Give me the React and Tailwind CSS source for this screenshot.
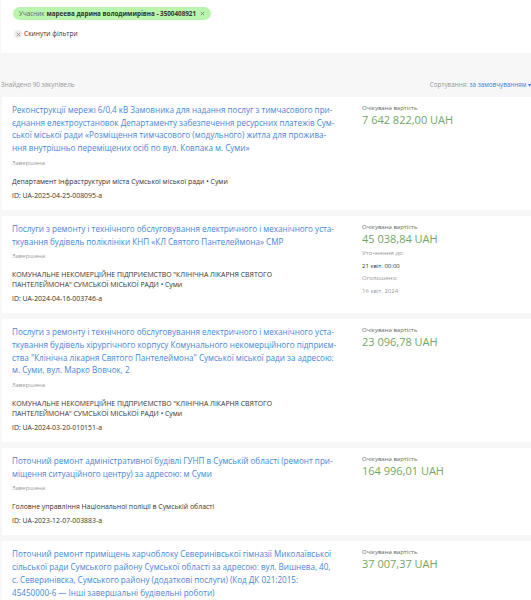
import React from 'react';

const tenders = [
  {
    title: [
      'Реконструкції мережі 6/0,4 кВ Замовника для надання послуг з тимчасового при-',
      'єднання електроустановок Департаменту забезпечення ресурсних платежів Сум-',
      'ської міської ради «Розміщення тимчасового (модульного) житла для прожива-',
      'ння внутрішньо переміщених осіб по вул. Ковпака м. Суми»',
    ],
    org: ['Департамент інфраструктури міста Сумської міської ради • Суми'],
    id: 'UA-2025-04-25-008095-a',
    value: '7 642 822,00 UAH',
  },
  {
    title: [
      'Послуги з ремонту і технічного обслуговування електричного і механічного уста-',
      'ткування будівель поліклініки КНП «КЛ Святого Пантелеймона» СМР',
    ],
    org: [
      'КОМУНАЛЬНЕ НЕКОМЕРЦІЙНЕ ПІДПРИЄМСТВО "КЛІНІЧНА ЛІКАРНЯ СВЯТОГО',
      'ПАНТЕЛЕЙМОНА" СУМСЬКОЇ МІСЬКОЇ РАДИ • Суми',
    ],
    id: 'UA-2024-04-16-003746-a',
    value: '45 038,84 UAH',
    extra: true,
  },
  {
    title: [
      'Послуги з ремонту і технічного обслуговування електричного і механічного уста-',
      'ткування будівель хірургічного корпусу Комунального некомерційного підприєм-',
      'ства "Клінічна лікарня Святого Пантелеймона" Сумської міської ради за адресою:',
      'м. Суми, вул. Марко Вовчок, 2',
    ],
    org: [
      'КОМУНАЛЬНЕ НЕКОМЕРЦІЙНЕ ПІДПРИЄМСТВО "КЛІНІЧНА ЛІКАРНЯ СВЯТОГО',
      'ПАНТЕЛЕЙМОНА" СУМСЬКОЇ МІСЬКОЇ РАДИ • Суми',
    ],
    id: 'UA-2024-03-20-010151-a',
    value: '23 096,78 UAH',
  },
  {
    title: [
      'Поточний ремонт адміністративної будівлі ГУНП в Сумській області (ремонт при-',
      'міщення ситуаційного центру) за адресою: м Суми',
    ],
    org: ['Головне управління Національної поліції в Сумській області'],
    id: 'UA-2023-12-07-003883-a',
    value: '164 996,01 UAH',
  },
  {
    title: [
      'Поточний ремонт приміщень харчоблоку Северинівської гімназії Миколаївської',
      'сільської ради Сумського району Сумської області за адресою: вул. Вишнева, 40,',
      'с. Северинівска, Сумського району (додаткові послуги) (Код ДК 021:2015:',
      '45450000-6 — Інші завершальні будівельні роботи)',
    ],
    value: '37 007,37 UAH',
  },
];

function X({ className }) {
  return (
    <svg viewBox="0 0 10 10" className={className} fill="none" stroke="currentColor" strokeWidth="1.2" strokeLinecap="round">
      <path d="M3 3l4 4M7 3l-4 4" />
    </svg>
  );
}

function TenderCard({ t }) {
  return (
    <div className="ml-[2px] bg-white pt-[7px] pb-[9px] pl-[10px] flex">
      <div className="w-[350px] shrink-0">
        <div className="text-[8.1px] leading-[12.7px] text-[#4787d8]">
          {t.title.map((l, i) => (
            <div key={i} className="whitespace-nowrap">{l}</div>
          ))}
        </div>
        <div className="mt-[3px] text-[6px] leading-[10px] text-[#9a9a9a]">Завершена</div>
        {t.org && (
          <>
            <div className="mt-[9px] text-[6.9px] leading-[10px] text-[#333]">
              {t.org.map((l, i) => (
                <div key={i} className="whitespace-nowrap">{l}</div>
              ))}
            </div>
            <div className="mt-[4px] text-[6.9px] leading-[10px] text-[#333]">ID: {t.id}</div>
          </>
        )}
      </div>
      <div className="w-[170px]">
        <div className="text-[6px] leading-[9px] text-[#666]">Очікувана вартість</div>
        <div className="text-[11px] leading-[14px] text-[#6fa866]">{t.value}</div>
        {t.extra && (
          <div className="mt-[1px] text-[6px] leading-[12.7px]">
            <div className="text-[#999]">Уточнення до:</div>
            <div className="text-[#333]">21 квіт. 00:00</div>
            <div className="text-[#999]">Оголошено:</div>
            <div className="text-[#999]">16 квіт. 2024</div>
          </div>
        )}
      </div>
    </div>
  );
}

export default function App() {
  return (
    <div className="h-[600px] bg-[#f7f7f7] overflow-hidden" style={{ fontFamily: '"Open Sans", "Noto Sans", sans-serif' }}>
      <div className="ml-[1px] bg-white h-[53px] pt-[7px] pl-[12px]">
        <div className="flex w-fit items-center h-[13px] rounded-full bg-[#b9f5ad] pl-[6px] pr-[5px] text-[6.3px] leading-[13px] text-[#333]">
          <span className="text-[#666]">Учасник</span>
          <span className="ml-[2px] font-bold">мареева дарина володимирівна - 3500408921</span>
          <X className="ml-[3px] w-[7px] h-[7px] text-[#777]" />
        </div>
        <div className="mt-[9px] flex items-center h-[10px] text-[6.6px] text-[#333]">
          <span className="flex items-center justify-center w-[8px] h-[8px] rounded-full bg-[#eee] ml-[1px]">
            <X className="w-[7px] h-[7px] text-[#888]" />
          </span>
          <span className="ml-[2px]">Скинути фільтри</span>
        </div>
      </div>
      <div className="flex justify-between items-center mt-[27px] h-[10px] pl-[1px] text-[6.3px] whitespace-nowrap">
        <span className="text-[#999]">Знайдено 90 закупівель</span>
        <span className="text-[#999]">
          Сортування: <span className="text-[#3f7fd6]">за замовчуванням ▾</span>
        </span>
      </div>
      <div className="mt-[7px] flex flex-col gap-[6px]">
        {tenders.map((t, i) => (
          <TenderCard key={i} t={t} />
        ))}
      </div>
    </div>
  );
}
